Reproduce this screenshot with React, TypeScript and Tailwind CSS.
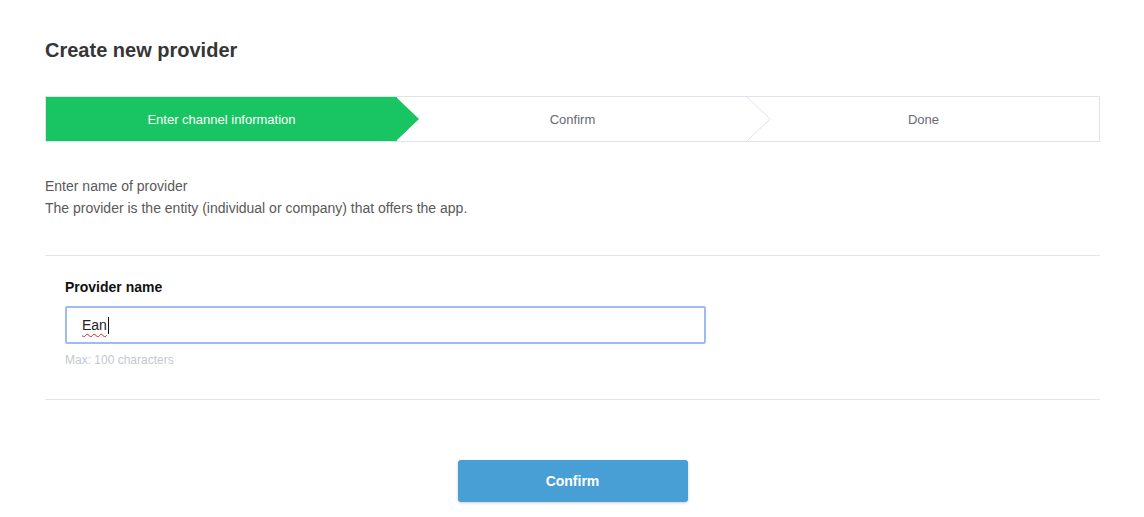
import React from 'react';

const steps = ['Enter channel information', 'Confirm', 'Done'];

const Stepper: React.FC<{ active: number }> = ({ active }) => {
  return (
    <div className="mt-[34px] flex h-[46px] border border-[#dfe3ea]">
      {steps.map((label, i) => {
        const isActive = i === active;
        const last = i === steps.length - 1;
        return (
          <div
            key={label}
            className={`relative flex flex-1 items-center justify-center pt-[1px] text-[13px] ${
              isActive ? 'bg-[#19c463] text-white' : 'bg-white text-[#666a70]'
            }`}
          >
            <span>{label}</span>
            {!last && (
              <svg
                className="absolute right-[-23px] top-0 z-10 h-[44px] w-[24px]"
                viewBox="0 0 24 44"
                preserveAspectRatio="none"
              >
                {isActive ? (
                  <polygon points="0,0 23,22 0,44" fill="#19c463" />
                ) : (
                  <polyline points="0,0 23,22 0,44" fill="white" stroke="#dfe3ea" strokeWidth="1" />
                )}
              </svg>
            )}
          </div>
        );
      })}
    </div>
  );
};

export default function App() {
  return (
    <div className="min-h-screen bg-white font-['Liberation_Sans',Arial,sans-serif]">
      <div className="px-[45px] pr-[44px] pt-[38px]">
        <h1 className="text-[20px] font-bold leading-[24px] text-[#363636]">Create new provider</h1>

        <Stepper active={0} />

        <div className="mt-[33px] text-[14px] leading-[22px] text-[#595959]">
          <p>Enter name of provider</p>
          <p>The provider is the entity (individual or company) that offers the app.</p>
        </div>

        <div className="mt-[36px] border-t border-[#e2e5ec] px-[20px] pb-[31px] pt-[21px]">
          <label className="block text-[14px] font-bold leading-[20px] text-[#111]">Provider name</label>
          <div className="mt-[9px] flex h-[38px] w-[641px] items-center rounded-[2px] border-2 border-[#9dbcf5] pl-[15px] text-[14px] text-[#222]">
            <span className="underline decoration-[#e02020] decoration-wavy decoration-1 underline-offset-[3px]">Ean</span>
            <span className="ml-[1px] inline-block h-[17px] w-px bg-[#111]" />
          </div>
          <p className="mt-[8px] text-[12px] leading-[16px] text-[#c3c8d0]">Max: 100 characters</p>
        </div>

        <div className="border-t border-[#e2e5ec]" />

        <div className="mt-[60px] flex justify-center">
          <button
            type="button"
            className="h-[42px] w-[230px] rounded-[3px] bg-[#479fd6] text-[14px] font-bold text-white shadow-[0_1px_3px_rgba(0,0,0,0.2)]"
          >
            Confirm
          </button>
        </div>
      </div>
    </div>
  );
}
